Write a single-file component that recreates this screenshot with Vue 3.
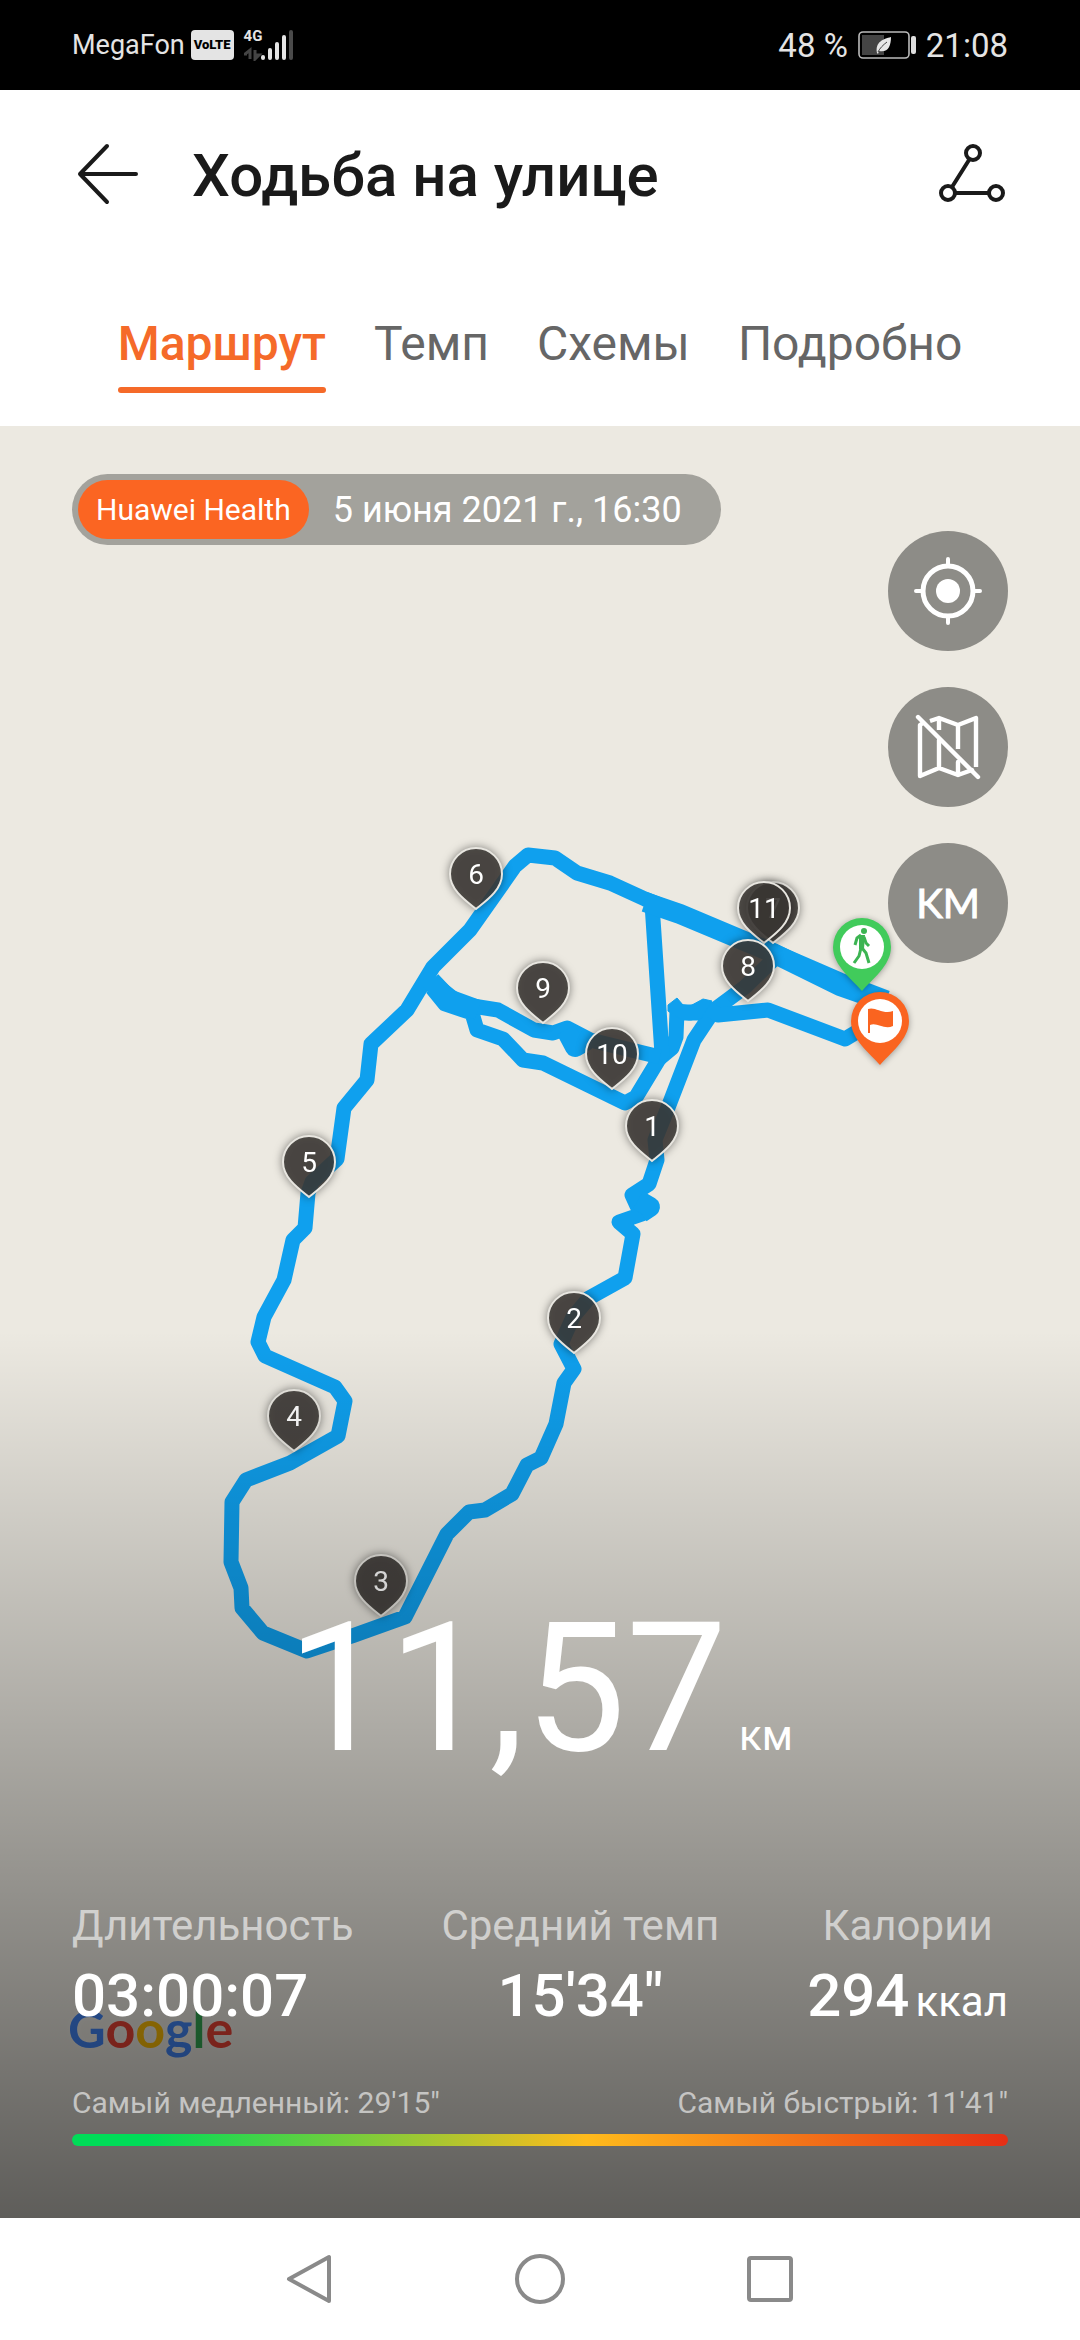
<script setup>
import { ref } from "vue";

const tabs = ["Маршрут", "Темп", "Схемы", "Подробно"];
const activeTab = ref("Маршрут");

// route segments, drawn in map coordinates
const routes = [
  "M887 998L840 980L773 951L645 899L610 883L577 873L555 858L528 855L515 866L470 930L433 967L407 1010L371 1044L367 1080L344 1108L337 1159L312 1182L308 1193L305 1228L293 1240L284 1280L264 1317L258 1342L265 1356L335 1387L345 1401L338 1436L290 1463L246 1480L232 1502L231 1562L241 1588L242 1608L263 1633L307 1651L352 1636L405 1617L447 1534L469 1512L485 1510L512 1494L527 1465L541 1458L556 1424L564 1383L574 1369L561 1344L573 1317L589 1298L625 1278L633 1234L619 1222L642 1214L650 1205L637 1206L632 1195L649 1184L657 1160L655 1140L669 1105L694 1040L714 1010L745 987L775 958",
  "M890 1012L845 1039L768 1010L718 1015L707 1008L690 1013L677 1011L676 1037L672 1048L660 1058",
  "M652 904L662 1054L636 1097L625 1103L543 1063L523 1060L503 1039L477 1030L472 1013L445 1004L432 988",
  "M436 985L460 1004L498 1010L534 1030L553 1033L567 1028L590 1040L660 1057",
];
// stretches walked twice, where the line reads thicker
const doubled = [
  "M645 902L680 914L773 953L840 986L880 1000",
  "M431 981L448 999L478 1010",
  "M566 1030L575 1047L587 1040",
  "M638 1200L650 1207L641 1213",
];

const pins = [
  { label: "7", x: 773, y: 943 },
  { label: "11", x: 764, y: 943 },
  { label: "8", x: 748, y: 1001 },
  { label: "6", x: 476, y: 909 },
  { label: "9", x: 543, y: 1023 },
  { label: "10", x: 612, y: 1089 },
  { label: "1", x: 652, y: 1161 },
  { label: "2", x: 574, y: 1353 },
  { label: "3", x: 381, y: 1616 },
  { label: "4", x: 294, y: 1451 },
  { label: "5", x: 309, y: 1197 },
];

const googleLogo = [
  { letter: "G", color: "#4285f4" },
  { letter: "o", color: "#ea4335" },
  { letter: "o", color: "#fbbc05" },
  { letter: "g", color: "#4285f4" },
  { letter: "l", color: "#34a853" },
  { letter: "e", color: "#ea4335" },
];
</script>

<template>
  <div class="screen">
    <div class="status-bar">
      <div class="status-left">
        <span class="carrier">MegaFon</span>
        <span class="volte">VoLTE</span>
        <div class="network">
          <span class="network-type">4G</span>
          <svg class="signal" width="52" height="32" viewBox="0 0 52 32">
            <path d="M6 30V21L1 25H3M11 21V30L15 26H12" fill="none" stroke="#444" stroke-width="3" />
            <g stroke="#e4e4e4" stroke-width="4" stroke-linecap="round">
              <path d="M19 28V29M26 21V29M33 15V29M40 8V29" />
              <path d="M47 3V29" stroke="#4a4a4a" />
            </g>
          </svg>
        </div>
      </div>
      <div class="status-right">
        <span>48 %</span>
        <svg width="58" height="28" viewBox="0 0 58 28">
          <rect x="1" y="1" width="50" height="26" rx="4" fill="none" stroke="#bbb" stroke-width="1.6" />
          <rect x="4" y="4" width="22" height="20" fill="#444" />
          <path d="M19 22C17 11 25 8 33 6C33 15 30 22 21 20L20 23Z" fill="#e6e6e6" />
          <path d="M20 21C22 17 25 14 29 11" fill="none" stroke="#444" stroke-width="1" />
          <rect x="53" y="5" width="5" height="18" rx="2" fill="#ddd" />
        </svg>
        <span>21:08</span>
      </div>
    </div>

    <header class="header">
      <button class="icon-button" type="button" aria-label="Назад">
        <svg width="72" height="72" viewBox="0 0 72 72">
          <path d="M64 36H8M35 8L8 36L35 64" fill="none" stroke="#1a1a1a" stroke-width="4" stroke-linecap="round" stroke-linejoin="round" />
        </svg>
      </button>
      <h1 class="title">Ходьба на улице</h1>
      <button class="icon-button" type="button" aria-label="Поделиться">
        <svg width="72" height="72" viewBox="0 0 72 72">
          <g fill="none" stroke="#1a1a1a" stroke-width="4">
            <path d="M33 22L16 49M19 55H53" />
            <circle cx="37" cy="15" r="7" />
            <circle cx="12" cy="55" r="7" />
            <circle cx="60" cy="55" r="7" />
          </g>
        </svg>
      </button>
    </header>

    <nav class="tabs">
      <button
        v-for="tab in tabs"
        :key="tab"
        type="button"
        class="tab"
        :class="{ active: tab === activeTab }"
        @click="activeTab = tab"
      >
        {{ tab }}
      </button>
    </nav>

    <main class="map">
      <svg class="map-canvas" viewBox="0 426 1080 1792" preserveAspectRatio="xMidYMid slice">
        <g class="route">
          <path v-for="d in routes" :key="d" :d="d" />
          <path v-for="d in doubled" :key="d" :d="d" class="doubled" />
          <path class="knot" d="M668 1005L677 998L683 1005H692L703 999L712 1001L700 1020H683L675 1016L668 1011Z" />
        </g>
        <g v-for="pin in pins" :key="pin.label" class="pin" :transform="`translate(${pin.x} ${pin.y})`">
          <path d="M0 0C-10 -8 -26 -19 -26 -35A26 26 0 0 1 26 -35C26 -19 10 -8 0 0Z" />
          <text x="0" y="-25">{{ pin.label }}</text>
        </g>
        <g class="flag" transform="translate(862 991)">
          <path d="M0 0C-9 -11 -29 -25 -29 -44A29 29 0 0 1 29 -44C29 -25 9 -11 0 0Z" fill="#41cb5b" />
          <circle cx="0" cy="-44" r="22" fill="#fff" />
          <circle cx="2" cy="-60" r="3" fill="#3cb452" />
          <path d="M-1 -56L-5 -53L-7 -46M-1 -56V-43L-3 -35L-8 -28M0 -43L4 -38L7 -28M2 -54L4 -48L7 -45" fill="none" stroke="#3cb452" stroke-width="3" stroke-linejoin="round" />
          <path d="M-3 -56L3 -56L2 -42L-3 -42Z" fill="#3cb452" />
        </g>
        <g class="flag" transform="translate(880 1065)">
          <path d="M0 0C-9 -11 -29 -25 -29 -44A29 29 0 0 1 29 -44C29 -25 9 -11 0 0Z" fill="#fa6420" />
          <circle cx="0" cy="-44" r="22" fill="#fff" />
          <path d="M-12 -56C-5 -59 3 -50 13 -54V-39C4 -35 -3 -43 -10 -40V-32H-12Z" fill="#fa6420" />
        </g>
      </svg>

      <div class="map-top">
        <div class="session">
          <span class="source">Huawei Health</span>
          <time class="date" datetime="2021-06-05T16:30">5 июня 2021 г., 16:30</time>
        </div>
        <div class="controls">
          <button type="button" class="control" aria-label="Моё местоположение">
            <svg width="120" height="120" viewBox="0 0 120 120">
              <g fill="none" stroke="#fff" stroke-width="4" stroke-linecap="round">
                <circle cx="60" cy="60" r="25" stroke-width="5" />
                <path d="M60 28V34M60 86V92M28 60H34M86 60H92" />
              </g>
              <circle cx="60" cy="60" r="12" fill="#fff" />
            </svg>
          </button>
          <button type="button" class="control" aria-label="Скрыть карту">
            <svg width="120" height="120" viewBox="0 0 120 120">
              <g fill="none" stroke="#fff" stroke-width="4.4" stroke-linecap="round" stroke-linejoin="round">
                <path d="M35 36L32 38V89L51 81L70 88L84 83M51 53V81M70 75V88" />
                <path d="M42 34L51 31L70 38L88 31V80M51 31V43M70 38V62" stroke-linecap="butt" />
                <path d="M30 30L90 90" />
              </g>
            </svg>
          </button>
          <button type="button" class="control km">KM</button>
        </div>
      </div>

      <div class="google">
        <span v-for="(item, i) in googleLogo" :key="i" :style="{ color: item.color }">{{ item.letter }}</span>
      </div>

      <section class="summary">
        <div class="distance">
          <span class="distance-value">11,57</span>
          <span class="unit">км</span>
        </div>
        <div class="stats">
          <div class="stat stat-first">
            <div class="stat-label">Длительность</div>
            <div class="stat-value">03:00:07</div>
          </div>
          <div class="stat">
            <div class="stat-label">Средний темп</div>
            <div class="stat-value">15'34"</div>
          </div>
          <div class="stat">
            <div class="stat-label">Калории</div>
            <div class="stat-value">294<span class="unit kcal">ккал</span></div>
          </div>
        </div>
        <div class="pace">
          <span>Самый медленный: 29'15"</span>
          <span>Самый быстрый: 11'41"</span>
        </div>
        <div class="pace-bar"></div>
      </section>
    </main>

    <footer class="nav-bar">
      <button type="button" class="icon-button" aria-label="Назад">
        <svg width="60" height="60" viewBox="0 0 60 60">
          <path d="M49 8V52L9 30Z" fill="none" stroke="#8a8a8a" stroke-width="4" stroke-linejoin="round" />
        </svg>
      </button>
      <button type="button" class="icon-button" aria-label="Главный экран">
        <svg width="60" height="60" viewBox="0 0 60 60">
          <circle cx="30" cy="30" r="23" fill="none" stroke="#8a8a8a" stroke-width="4" />
        </svg>
      </button>
      <button type="button" class="icon-button" aria-label="Недавние">
        <svg width="60" height="60" viewBox="0 0 60 60">
          <rect x="9" y="9" width="42" height="42" rx="2" fill="none" stroke="#8a8a8a" stroke-width="4" />
        </svg>
      </button>
    </footer>
  </div>
</template>

<style>
body {
  margin: 0;
  background: #fff;
}
</style>

<style scoped>
.screen {
  display: flex;
  flex-direction: column;
  min-height: 100vh;
  font-family: Roboto, "Noto Sans", sans-serif;
  color: #1a1a1a;
}
button {
  border: 0;
  padding: 0;
  background: none;
  font-family: inherit;
  cursor: pointer;
}
svg {
  display: block;
}
.status-bar {
  display: flex;
  justify-content: space-between;
  align-items: center;
  height: 90px;
  padding: 0 72px;
  background: #000;
  color: #e4e4e4;
}
.status-left {
  display: flex;
  align-items: center;
  gap: 6px;
  font-size: 27px;
}
.volte {
  padding: 0 3px;
  border-radius: 4px;
  background: #e4e4e4;
  color: #000;
  font-size: 13px;
  font-weight: 900;
  line-height: 30px;
}
.network {
  position: relative;
  margin-left: 4px;
}
.network-type {
  position: absolute;
  top: -2px;
  left: 0;
  font-size: 15px;
  font-weight: 700;
  line-height: 18px;
}
.status-right {
  display: flex;
  align-items: center;
  gap: 10px;
  font-size: 33px;
}
.header {
  display: flex;
  align-items: center;
  height: 168px;
  padding: 0 72px;
}
.title {
  flex: 1;
  margin: 4px 0 0 48px;
  font-size: 60px;
  font-weight: 500;
  line-height: 72px;
}
.tabs {
  display: flex;
  justify-content: center;
  gap: 48px;
  padding: 57px 0 33px;
}
.tab {
  padding-bottom: 14px;
  border-bottom: 6px solid transparent;
  color: #666;
  font-size: 48px;
  line-height: 58px;
}
.tab.active {
  position: relative;
  color: #f56a29;
  font-weight: 500;
}
.tab.active::after {
  content: "";
  position: absolute;
  right: 0;
  bottom: -6px;
  left: 0;
  height: 6px;
  border-radius: 3px;
  background: #f56a29;
}
.map {
  position: relative;
  display: flex;
  flex: 1;
  flex-direction: column;
  overflow: hidden;
  background: #ece9e1;
}
.map-canvas {
  position: absolute;
  inset: 0;
  width: 100%;
  height: 100%;
}
.route path {
  fill: none;
  stroke: #0fa0ee;
  stroke-width: 15;
  stroke-linejoin: round;
}
.route .doubled {
  stroke-width: 20;
}
.route .knot {
  fill: #0fa0ee;
  stroke-width: 1;
}
.pin path {
  fill: rgba(60, 56, 53, 0.85);
  stroke: #e8e6e0;
  stroke-width: 2;
}
.pin {
  filter: drop-shadow(0 0 4px rgba(0, 0, 0, 0.5));
}
.pin text {
  fill: #fff;
  font-size: 28px;
  text-anchor: middle;
}
.flag {
  filter: drop-shadow(0 1px 3px rgba(0, 0, 0, 0.35));
}
.map-top {
  position: relative;
  display: flex;
  justify-content: space-between;
  align-items: flex-start;
  padding: 48px 72px 0;
}
.session {
  display: flex;
  align-items: center;
  padding: 6px 39px 6px 6px;
  border-radius: 36px;
  background: #a3a29c;
  color: #fff;
}
.source {
  padding: 0 18px;
  border-radius: 30px;
  background: #fb6522;
  font-size: 30px;
  line-height: 59px;
}
.date {
  margin-left: 24px;
  font-size: 36px;
}
.controls {
  display: flex;
  flex-direction: column;
  gap: 36px;
  margin-top: 57px;
}
.control {
  width: 120px;
  height: 120px;
  border-radius: 50%;
  background: #8d8c87;
  color: #fff;
}
.km {
  font-family: Lato, sans-serif;
  font-size: 40px;
  font-weight: 400;
  -webkit-text-stroke: 1px #fff;
}
/* the logo belongs to the map, so the summary shade covers it */
.google {
  position: absolute;
  bottom: 160px;
  left: 68px;
  font-family: Lato, sans-serif;
  font-size: 52px;
  font-weight: 700;
  line-height: 60px;
  text-shadow: 0 0 6px rgba(255, 255, 255, 0.3);
}
.summary {
  position: relative;
  margin-top: auto;
  padding: 258px 72px 72px;
  background: linear-gradient(rgba(0, 0, 0, 0), rgba(0, 0, 0, 0.6));
  color: #fff;
}
.distance {
  display: flex;
  justify-content: center;
  align-items: baseline;
  gap: 12px;
  margin-bottom: 112px;
}
.distance-value {
  font-size: 180px;
  line-height: 200px;
}
.unit {
  font-size: 42px;
  font-weight: 400;
  line-height: 42px;
}
.stats {
  display: flex;
  justify-content: space-between;
}
.stat {
  text-align: center;
}
.stat-first {
  text-align: left;
}
.stat-label {
  margin-bottom: 9px;
  color: rgba(255, 255, 255, 0.6);
  font-size: 42px;
  line-height: 50px;
}
.stat-value {
  font-size: 60px;
  font-weight: 500;
  line-height: 72px;
}
.kcal {
  margin-left: 6px;
}
.pace {
  display: flex;
  justify-content: space-between;
  margin-top: 53px;
  color: rgba(255, 255, 255, 0.6);
  font-size: 30px;
  line-height: 36px;
}
.pace-bar {
  height: 12px;
  margin-top: 13px;
  border-radius: 6px;
  background: linear-gradient(90deg, #00dc58 8%, #ffbb1c 55%, #e62e16);
}
.nav-bar {
  display: flex;
  justify-content: center;
  align-items: center;
  gap: 170px;
  height: 122px;
  background: #fff;
}
</style>
